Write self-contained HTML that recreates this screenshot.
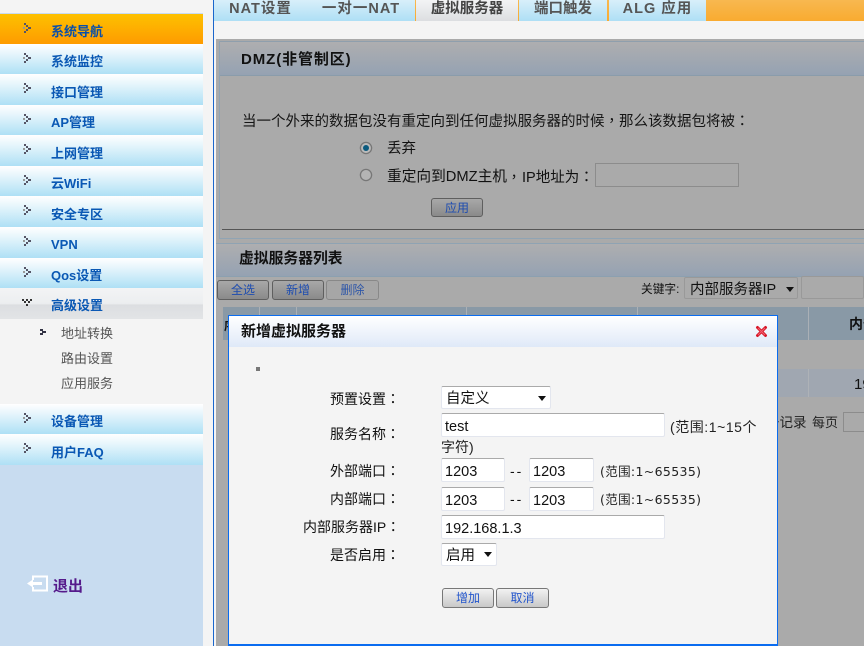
<!DOCTYPE html>
<html><head><meta charset="utf-8"><style>
html,body{margin:0;padding:0;width:864px;height:646px;overflow:hidden;background:#f4f4f4;}
body{position:relative;font-family:"Liberation Sans","Noto Sans CJK SC",sans-serif;font-size:14px;color:#111;}
.a,.t,.m,.s,.inp,.btn,.tab,svg.i{position:absolute;}
.t{white-space:nowrap;line-height:20px;}
i{font-style:normal;font-family:"Noto Sans CJK TC",sans-serif;}
.m{left:0;width:203px;background:linear-gradient(#fff 0%,#e8f6fc 30%,#aee0f5 100%);}
.m b{position:absolute;left:51px;top:50%;margin-top:-7px;line-height:20px;font-size:13px;color:#0a58b4;white-space:nowrap;}
.m svg{position:absolute;left:23px;top:9px;}
.s{left:61px;font-size:13px;color:#555;line-height:20px;white-space:nowrap;}
.tab{top:0;height:21px;background:linear-gradient(#d8effa,#aedff5);color:#555;font-weight:bold;font-size:14.5px;line-height:18px;text-align:center;white-space:nowrap;}
.inp{box-sizing:border-box;background:#fff;border:1px solid #e3e6ee;border-top:1px solid #aaa;border-radius:2px;line-height:26px;padding-left:3px;color:#111;white-space:nowrap;font-size:14.5px;}
.sel{padding-left:4px;line-height:24px;}
.btn{box-sizing:border-box;height:20px;border:1px solid #777;border-radius:3px;text-align:center;font-size:12px;line-height:18px;color:#2255cc;background:linear-gradient(#f2f2f2,#c8c8c8);}
.dim{background:linear-gradient(#a8a8a8,#8a8a8a);border-color:#5f5f5f;color:#1d4cb0;}
.arr{position:absolute;width:0;height:0;border:4px solid transparent;border-top:5px solid #111;border-bottom:0;}
.hd{left:216px;width:648px;background:linear-gradient(#aeaeb0,#95a2b2);}
.nt{font-family:"DejaVu Sans","Noto Sans CJK SC",sans-serif;font-size:12.5px;letter-spacing:.35px;color:#222;}
</style></head><body>
<svg width="0" height="0" style="position:absolute"><defs><g id="ar" fill="#556"><rect x="1" y="0" width="2" height="2"/><rect x="3" y="2" width="2" height="2"/><rect x="5" y="4" width="3" height="2"/><rect x="3" y="6" width="2" height="2"/><rect x="1" y="8" width="2" height="2"/><rect x="0" y="4" width="2" height="2" fill="#999"/></g></defs></svg>

<!-- sidebar -->
<div class="a" style="left:0;top:13px;width:203px;height:633px;background:#c8dcf0"></div>
<div class="m" style="top:14px;height:30px;background:linear-gradient(#fdc100,#fe9b00)"><svg width="10" height="12"><use href="#ar"/></svg><b style="color:#0a50a8">系统导航</b></div>
<div class="m" style="top:44px;height:30px"><svg width="10" height="12"><use href="#ar"/></svg><b>系统监控</b></div>
<div class="m" style="top:74px;height:31px"><svg width="10" height="12"><use href="#ar"/></svg><b>接口管理</b></div>
<div class="m" style="top:105px;height:30px"><svg width="10" height="12"><use href="#ar"/></svg><b>AP管理</b></div>
<div class="m" style="top:135px;height:31px"><svg width="10" height="12"><use href="#ar"/></svg><b>上网管理</b></div>
<div class="m" style="top:166px;height:30px"><svg width="10" height="12"><use href="#ar"/></svg><b>云WiFi</b></div>
<div class="m" style="top:196px;height:31px"><svg width="10" height="12"><use href="#ar"/></svg><b>安全专区</b></div>
<div class="m" style="top:227px;height:31px"><svg width="10" height="12"><use href="#ar"/></svg><b style="margin-top:-8px">VPN</b></div>
<div class="m" style="top:258px;height:30px"><svg width="10" height="12"><use href="#ar"/></svg><b>Qos设置</b></div>
<div class="m" style="top:288px;height:31px;background:linear-gradient(#f3f4f5 0%,#eceef0 50%,#dcdee1 55%,#e2e4e6 100%)">
<svg width="12" height="10" style="left:22px;top:11px"><g fill="#333"><rect x="0" y="0" width="2" height="2"/><rect x="4" y="0" width="2" height="2"/><rect x="8" y="0" width="2" height="2"/><rect x="2" y="2" width="2" height="2"/><rect x="6" y="2" width="2" height="2"/><rect x="4" y="5" width="2" height="2"/></g></svg><b style="margin-top:-8px">高级设置</b></div>
<div class="a" style="left:0;top:319px;width:203px;height:85px;background:#f4f4f4"></div>
<svg class="i" style="left:40px;top:329px" width="7" height="7"><path d="M0 0h3v2h3v2H3v2H0V4h2V2H0z" fill="#334"/></svg>
<div class="s" style="top:324px">地址转换</div>
<div class="s" style="top:349px">路由设置</div>
<div class="s" style="top:374px">应用服务</div>
<div class="m" style="top:404px;height:30px"><svg width="10" height="12"><use href="#ar"/></svg><b>设备管理</b></div>
<div class="m" style="top:434px;height:31px"><svg width="10" height="12"><use href="#ar"/></svg><b>用户FAQ</b></div>
<svg class="i" style="left:27px;top:575px" width="22" height="18"><path d="M6 5V1.5H20V15.5H6V12" fill="none" stroke="#fff" stroke-width="2"/><path d="M0 8.5L6 4.5V7H15V10H6V12.5Z" fill="#fff"/></svg>
<div class="t" style="left:53px;top:577px;font-weight:bold;font-size:15px;color:#551a8b">退出</div>

<!-- divider -->
<div class="a" style="left:213px;top:0;width:1px;height:646px;background:#1a66cc"></div>

<!-- tabs -->
<div class="a" style="left:214px;top:0;width:650px;height:21px;background:linear-gradient(#f8b850,#f9ab30)"></div>
<div class="tab" style="left:214px;width:93px;letter-spacing:1px">NAT设置</div>
<div class="tab" style="left:307px;width:108px;letter-spacing:1px">一对一NAT</div>
<div class="tab" style="left:416px;width:102px;background:linear-gradient(#f3f4f5,#dcdee1);color:#444">虚拟服务器</div>
<div class="tab" style="left:519px;width:88px;">端口触发</div>
<div class="tab" style="left:609px;width:97px;letter-spacing:1px">ALG 应用</div>

<!-- dimmed content -->
<div class="a" style="left:216px;top:39px;width:648px;height:607px;background:#aaa"></div>
<div class="a hd" style="left:220px;top:41px;width:644px;height:33px;border-top:1px solid #8f9fad;border-bottom:1px solid #8a9cab;box-sizing:content-box"></div>
<div class="a" style="left:219px;top:41px;width:1px;height:197px;background:#90a4b4"></div>
<div class="a" style="left:219px;top:238px;width:645px;height:1px;background:#90a4b4"></div>
<div class="t" style="left:241px;top:50px;font-weight:bold;font-size:15px;letter-spacing:.9px;color:#111">DMZ(非管制区)</div>
<div class="t" style="left:242px;top:111px;font-size:14.5px;color:#151515">当一个外来的数据包没有重定向到任何虚拟服务器的时候<i>，</i>那么该数据包将被<i>：</i></div>
<svg class="i" style="left:359px;top:141px" width="14" height="14"><circle cx="7" cy="7" r="5.6" fill="#bbb" stroke="#777" stroke-width="1.3"/><circle cx="7" cy="7" r="3" fill="#0b5a7e"/></svg>
<svg class="i" style="left:359px;top:168px" width="14" height="14"><circle cx="7" cy="7" r="5.6" fill="#b4b4b4" stroke="#777" stroke-width="1.3"/></svg>
<div class="t" style="left:387px;top:139px;font-size:14.5px">丢弃</div>
<div class="t" style="left:387px;top:167px;font-size:14.7px">重定向到DMZ主机</div>
<div class="t" style="left:507px;top:167px;font-size:14px"><i>，</i></div>
<div class="t" style="left:522px;top:167px;font-size:14.5px">IP地址为<i>：</i></div>
<div class="a" style="left:595px;top:163px;width:144px;height:24px;box-sizing:border-box;border:1px solid #8c8c8c;background:#aaa"></div>
<div class="btn dim" style="left:431px;top:198px;width:52px;height:19px;">应用</div>
<div class="a" style="left:222px;top:229px;width:642px;height:1px;background:#555"></div>
<div class="a hd" style="left:216px;top:243px;height:32px;border-top:1px solid #8fa3b3;border-bottom:1px solid #8ca0b0"></div>
<div class="t" style="left:239px;top:249px;font-weight:bold;font-size:14.8px;color:#111">虚拟服务器列表</div>
<div class="btn dim" style="left:217px;top:280px;width:52px">全选</div>
<div class="btn dim" style="left:272px;top:280px;width:52px">新增</div>
<div class="btn" style="left:326px;top:280px;width:53px;background:#a6a6a6;border-color:#888;color:#2e56a8">删除</div>
<div class="t" style="left:641px;top:280px;font-size:11.7px;color:#111">关键字:</div>
<div class="a" style="left:684px;top:277px;width:114px;height:22px;box-sizing:border-box;border:1px solid #999;border-radius:2px;background:#aaa"></div>
<div class="t" style="left:690px;top:280px;font-size:14.5px;color:#111">内部服务器IP</div>
<div class="arr" style="left:786px;top:287px"></div>
<div class="a" style="left:801px;top:276px;width:63px;height:23px;box-sizing:border-box;border:1px solid #999;border-radius:2px;background:#aaa"></div>
<div class="a" style="left:223px;top:307px;width:641px;height:33px;background:#8999a6"></div>
<div class="a" style="left:259px;top:307px;width:1px;height:33px;background:#aab0b6"></div>
<div class="a" style="left:296px;top:307px;width:1px;height:33px;background:#aab0b6"></div>
<div class="a" style="left:466px;top:307px;width:1px;height:33px;background:#aab0b6"></div>
<div class="a" style="left:637px;top:307px;width:1px;height:33px;background:#aab0b6"></div>
<div class="a" style="left:808px;top:307px;width:1px;height:33px;background:#aab0b6"></div>
<div class="t" style="left:849px;top:314px;font-weight:bold;color:#111">内部</div>
<div class="t" style="left:224px;top:316px;font-size:12px;font-weight:bold;color:#111">序</div>
<div class="a" style="left:778px;top:369px;width:86px;height:28px;background:#a0a7b1"></div>
<div class="a" style="left:808px;top:369px;width:1px;height:28px;background:#aeb2b7"></div>
<div class="t" style="left:854px;top:375px;font-size:15px;color:#111">192</div>
<div class="t" style="left:766px;top:413px;font-size:13.5px;color:#222">条记录</div>
<div class="t" style="left:812px;top:413px;font-size:13px;color:#222">每页</div>
<div class="a" style="left:843px;top:412px;width:30px;height:20px;box-sizing:border-box;border:1px solid #8c8c8c;background:#aaa"></div>

<!-- dialog -->
<div class="a" style="left:228px;top:315px;width:550px;height:331px;box-sizing:border-box;border:1px solid #0a6cf0;border-bottom-width:2px;background:#f4f4f4"></div>
<div class="a" style="left:229px;top:316px;width:548px;height:31px;background:linear-gradient(#fff,#dfe9f8)"></div>
<div class="t" style="left:241px;top:322px;font-weight:bold;font-size:15px;color:#111">新增虚拟服务器</div>
<svg class="i" style="left:755px;top:325px" width="13" height="13"><path d="M2.5 2.5L10.5 10.5M10.5 2.5L2.5 10.5" stroke="#d81828" stroke-width="3" stroke-linecap="round"/><path d="M3 3L10 10M10 3L3 10" stroke="#f06070" stroke-width="1"/></svg>
<div class="a" style="left:256px;top:367px;width:4px;height:4px;background:#777"></div>

<div class="t" style="left:330px;top:389px">预置设置<i>：</i></div>
<div class="inp sel" style="left:441px;top:386px;width:110px;height:23px">自定义</div>
<div class="arr" style="left:538px;top:396px"></div>
<div class="t" style="left:330px;top:424px">服务名称<i>：</i></div>
<div class="inp" style="left:441px;top:413px;width:224px;height:24px">test</div>
<div class="t" style="left:670px;top:417px;font-size:14px;letter-spacing:.55px;color:#222">(范围:1~15个</div>
<div class="t" style="left:441px;top:437px;font-size:14px;color:#222">字符)</div>

<div class="t" style="left:330px;top:461px">外部端口<i>：</i></div>
<div class="inp" style="left:441px;top:458px;width:64px;height:24px">1203</div>
<div class="t" style="left:510px;top:461px;letter-spacing:2px">--</div>
<div class="inp" style="left:529px;top:458px;width:65px;height:24px">1203</div>
<div class="t nt" style="left:600px;top:462px">(范围:1~65535)</div>

<div class="t" style="left:330px;top:489px">内部端口<i>：</i></div>
<div class="inp" style="left:441px;top:487px;width:64px;height:24px">1203</div>
<div class="t" style="left:510px;top:489px;letter-spacing:2px">--</div>
<div class="inp" style="left:529px;top:487px;width:65px;height:24px">1203</div>
<div class="t nt" style="left:600px;top:490px">(范围:1~65535)</div>

<div class="t" style="left:303px;top:517px">内部服务器IP<i>：</i></div>
<div class="inp" style="left:441px;top:515px;width:224px;height:24px">192.168.1.3</div>
<div class="t" style="left:330px;top:545px">是否启用<i>：</i></div>
<div class="inp sel" style="left:441px;top:543px;width:56px;height:23px">启用</div>
<div class="arr" style="left:484px;top:552px"></div>
<div class="btn" style="left:442px;top:588px;width:52px">增加</div>
<div class="btn" style="left:496px;top:588px;width:53px">取消</div>
</body></html>
